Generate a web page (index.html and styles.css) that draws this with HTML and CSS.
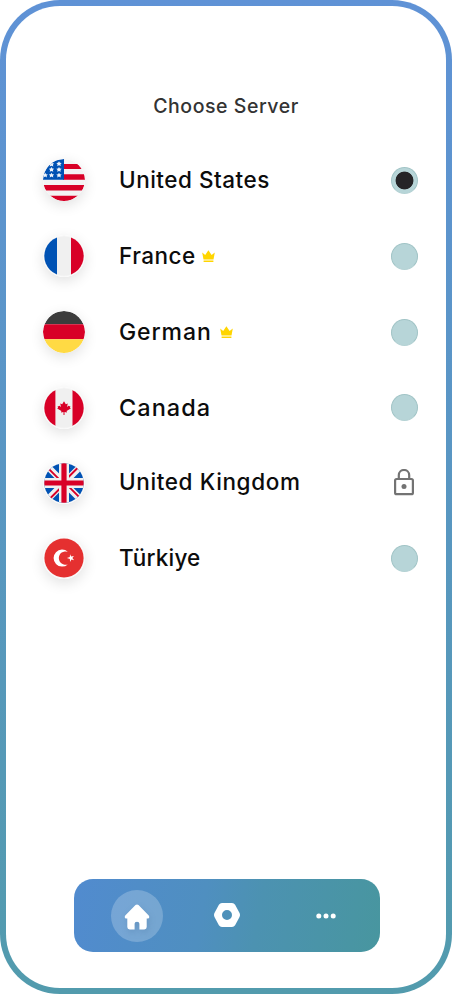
FILE: index.html
```html
<!DOCTYPE html>
<html lang="en">
<head>
<meta charset="utf-8">
<title>Choose Server</title>
<link rel="stylesheet" href="styles.css">
</head>
<body>
<main class="phone">
  <h1 class="title"><span>Choose Server</span></h1>
  <ul class="servers">
    <li class="server">
      <svg class="flag" viewBox="0 0 42 42"><defs><clipPath id="full"><circle cx="21" cy="21" r="21"/></clipPath><clipPath id="inset"><circle cx="21" cy="21" r="19.7"/></clipPath></defs>
        <g clip-path="url(#full)"><path fill="#f3f2f3" d="M0 0h42v42H0z"/><path fill="#d80027" d="M20 5h22v5H20zM20 15.3h22v5.5H20zM0 26h42v5.6H0zM0 36.8h42V42H0z"/><path fill="#0052b4" d="M0 0h21v20.8H0z"/>
        <g fill="#eef3fa"><path id="star" d="M16 2.3l.9 1.5 1.8.2-1.3 1.3.4 1.8-1.8-.9-1.8.9.4-1.8-1.3-1.3 1.8-.2z"/><use href="#star" y="5.7"/><use href="#star" y="11.4"/><use href="#star" x="-7.5" y="0.5"/><use href="#star" x="-7.5" y="5.7"/><use href="#star" x="-7.5" y="11.4"/><use href="#star" x="-13.8" y="11.4"/></g></g></svg>
      <span class="name united-states">United States</span>
      <span class="radio selected"></span>
    </li>
    <li class="server">
      <svg class="flag" viewBox="0 0 42 42"><circle cx="21" cy="21" r="21" fill="#f8f8f8"/><g clip-path="url(#inset)"><path fill="#f0f0f0" d="M0 0h42v42H0z"/><path fill="#0052b4" d="M0 0h14v42H0z"/><path fill="#d80027" d="M28 0h14v42H28z"/></g></svg>
      <span class="name france">France</span>
      <svg class="crown" viewBox="0 0 13 12"><path fill="#ffd500" d="M.2 2.6l3 2.3L6.4.2l3.2 4.7 3.2-2.3-1.3 7H1.5zM1.6 10.4h9.8v1.5H1.6z"/></svg>
      <span class="radio"></span>
    </li>
    <li class="server">
      <svg class="flag" viewBox="0 0 42 42"><g clip-path="url(#full)"><path fill="#3c3c3c" d="M0 0h42v13.2H0z"/><path fill="#d80027" d="M0 13.2h42v15H0z"/><path fill="#ffda44" d="M0 28.2h42V42H0z"/></g></svg>
      <span class="name german">German</span>
      <svg class="crown crown-wide" viewBox="0 0 13 12"><path fill="#ffd500" d="M.2 2.6l3 2.3L6.4.2l3.2 4.7 3.2-2.3-1.3 7H1.5zM1.6 10.4h9.8v1.5H1.6z"/></svg>
      <span class="radio"></span>
    </li>
    <li class="server">
      <svg class="flag" viewBox="0 0 42 42"><circle cx="21" cy="21" r="21" fill="#f8f8f8"/><g clip-path="url(#inset)"><path fill="#f0f0f0" d="M0 0h42v42H0z"/><path fill="#d80027" d="M0 0h12.4v42H0zM29.5 0H42v42H29.5z"/><path fill="#d80027" d="M21 14.2l1.8 3.1 2-.9-.8 3.7 1.6-1.3 2 1-.8.8 1 1-4.2 2.4.4 1.5-2.5-.4V28h-1v-2.9l-2.5.4.4-1.5-4.2-2.4 1-1-.8-.8 2-1 1.6 1.3-.8-3.7 2 .9z"/></g></svg>
      <span class="name canada">Canada</span>
      <span class="radio"></span>
    </li>
    <li class="server">
      <svg class="flag" viewBox="0 0 42 42"><circle cx="21" cy="21" r="21" fill="#f8f8f8"/><g clip-path="url(#inset)"><path fill="#0052b4" d="M0 0h42v42H0z"/><path stroke="#f0f0f0" stroke-width="6.5" d="M4 4l34 34M38 4L4 38"/><path stroke="#d80027" stroke-width="1.9" d="M4 5.2l12 12M25 15.5L36.5 4M26 24.8l12 12M17 26.5L5.5 38"/><path stroke="#f0f0f0" stroke-width="10" d="M21 0v42M0 21h42"/><path stroke="#d80027" stroke-width="5.2" d="M21 0v42M0 21h42"/></g></svg>
      <span class="name united-kingdom">United Kingdom</span>
      <svg class="lock" viewBox="0 0 20 27"><g fill="none" stroke="#737373" stroke-width="2.2"><rect x="1.1" y="10" width="17.8" height="15.2" rx="1.5"/><path d="M4.8 10V6.2a5.2 5.2 0 0 1 10.4 0V10"/></g><circle cx="10" cy="17.5" r="2.5" fill="#737373"/></svg>
    </li>
    <li class="server">
      <svg class="flag" viewBox="0 0 42 42"><circle cx="21" cy="21" r="21" fill="#f8f8f8"/><circle cx="21" cy="21" r="19.6" fill="#e53030"/><path fill="#fff" d="M24.8 14.8a8.5 8.5 0 1 0 0 12.6 6.7 6.7 0 1 1 0-12.6zM27 17.2l1.2 2.3 2.7-.6-1.5 2.2 1.7 2.1-2.7-.7-1.4 2.4-.1-2.8-3-1 2.9-1z"/></svg>
      <span class="name turkiye">Türkiye</span>
      <span class="radio"></span>
    </li>
  </ul>
  <nav class="navbar">
    <a class="tab home"><svg class="home-icon" viewBox="0 0 26 26"><path fill="#fff" d="M11.5 1.1q1.5-1.3 3 0l10 10.2c1.4 1.5.7 3.3-1.1 3.3h-.7v8.5q0 2.4-2.4 2.4h-4.9v-5.7q0-2.1-2.4-2.1t-2.4 2.1v5.7H5.7q-2.4 0-2.4-2.4v-8.5h-.7c-1.8 0-2.5-1.8-1.1-3.3z"/></svg></a>
    <a class="tab"><svg class="nut-icon" viewBox="0 0 26 24"><path fill="#fff" fill-rule="evenodd" d="M8 0h10q2 0 3.1 1.8l4.3 8q1.2 2.2 0 4.4l-4.3 8Q20 24 18 24H8q-2 0-3.1-1.8l-4.3-8q-1.2-2.2 0-4.4l4.3-8Q6 0 8 0zm5 7a5 5 0 1 0 0 10 5 5 0 0 0 0-10z"/></svg></a>
    <a class="tab more"><svg class="dots-icon" viewBox="0 0 20 6"><g fill="#fff"><circle cx="2.8" cy="3" r="2.5"/><circle cx="10" cy="3" r="2.5"/><circle cx="17.2" cy="3" r="2.5"/></g></svg></a>
  </nav>
</main>
</body>
</html>
```
FILE: styles.css
```css
* { box-sizing: border-box; }
body { margin: 0; background: #fff; font-family: Inter, "Liberation Sans", sans-serif; }
.phone {
  height: 994px;
  display: flex;
  flex-direction: column;
  align-items: center;
  padding: 90px 0 36px;
  border: 6px solid transparent;
  border-radius: 60px;
  background: linear-gradient(#fff, #fff) padding-box, linear-gradient(#5f92d6, #529bad) border-box;
}
.title {
  margin: 0;
  height: 20px;
  line-height: 20px;
  font-size: 19.5px;
  font-weight: 500;
  letter-spacing: 0.55px;
  color: #333;
}
.servers {
  align-self: stretch;
  margin: 26px 0 0;
  padding: 0 28px 0 37px;
  list-style: none;
  display: grid;
  grid-template-rows: 76px 76px 76px 75px 75px 76px;
}
.server { display: flex; align-items: center; }
.flag {
  width: 42px;
  height: 42px;
  flex: none;
  border-radius: 50%;
  box-shadow: 0 4px 14px rgba(0, 0, 0, 0.12);
}
.name {
  margin-left: 34px;
  font-size: 22.5px;
  line-height: 30px;
  font-weight: 500;
  color: #0c0c0c;
  white-space: nowrap;
}
.united-states { letter-spacing: 0.5px; }
.france { letter-spacing: 0.5px; }
.german { font-size: 23px; letter-spacing: 0.9px; }
.canada { font-size: 23.5px; letter-spacing: 1.05px; }
.united-kingdom { letter-spacing: 0.62px; padding-bottom: 1px; }
.turkiye { letter-spacing: 0.2px; padding-bottom: 1px; }
.crown { width: 13px; height: 12px; margin-left: 6px; }
.crown-wide { margin-left: 8.5px; }
.radio {
  width: 27px;
  height: 27px;
  margin-left: auto;
  border: 1px solid #a1c4c6;
  border-bottom-color: #b5d2d4;
  border-radius: 50%;
  background: #b7d5d8;
}
.selected { background: radial-gradient(circle, #252427 8.5px, #b7d5d8 9.3px); }
.lock { width: 20px; height: 27px; margin: 0 4px 0 auto; }
.navbar {
  width: 306px;
  height: 73px;
  margin: auto 0 0 1px;
  padding: 0 27px 0 37.5px;
  display: grid;
  grid-template-columns: 52px 52px 52px;
  column-gap: 38px;
  align-items: center;
  border-radius: 19px;
  background: linear-gradient(100deg, #518bcf, #4f8fc0 42%, #4c92b1 60%, #48969f);
}
.tab { width: 52px; height: 52px; display: flex; align-items: center; justify-content: center; border-radius: 50%; }
.home { background: rgba(255, 255, 255, 0.22); }
.more { margin-left: 8.5px; }
.home-icon { width: 26px; height: 26px; margin-top: 2px; filter: drop-shadow(1px 3px 3px rgba(40, 80, 120, 0.18)); }
.nut-icon { width: 26px; height: 24px; margin-bottom: 1px; }
.dots-icon { width: 20px; height: 6px; }
```
